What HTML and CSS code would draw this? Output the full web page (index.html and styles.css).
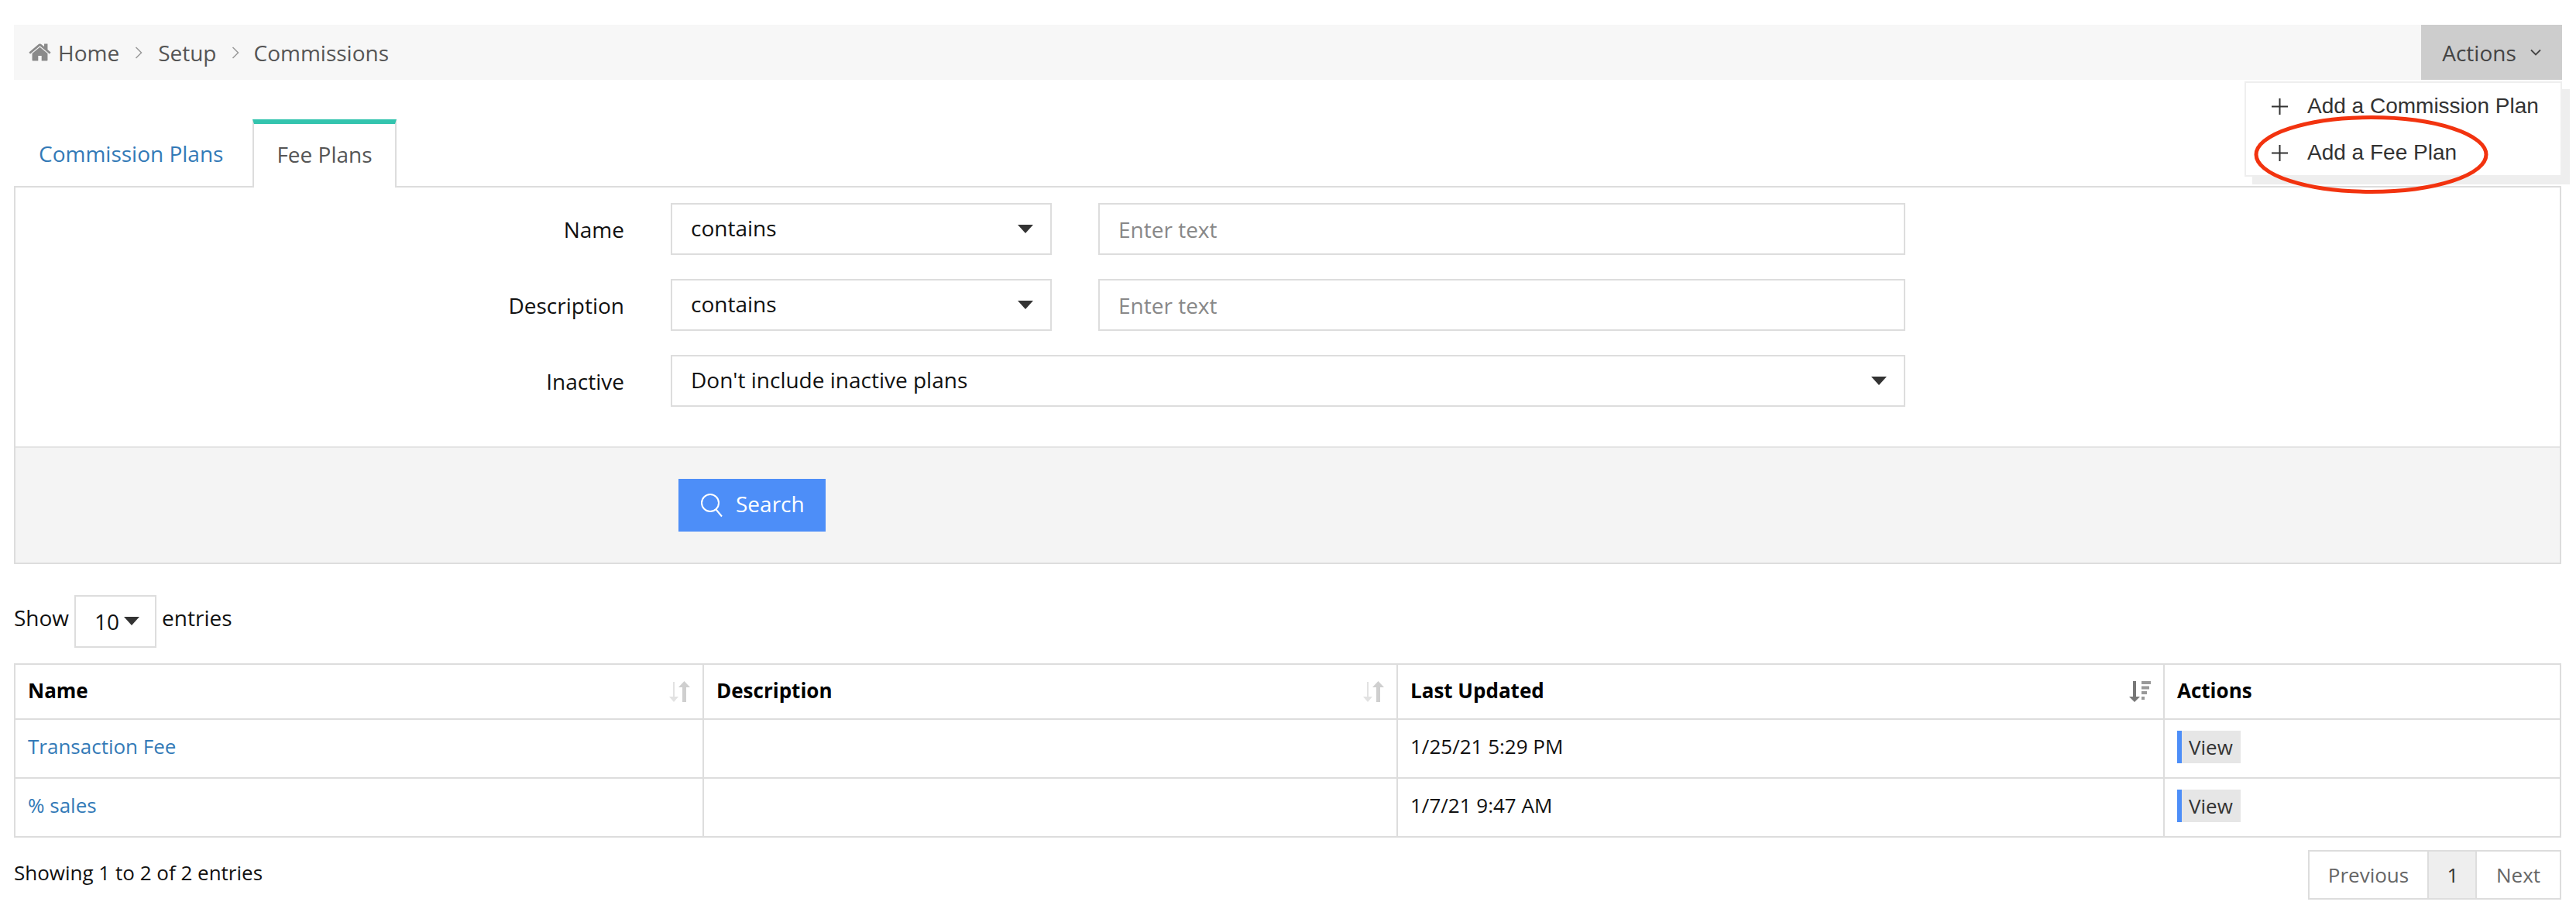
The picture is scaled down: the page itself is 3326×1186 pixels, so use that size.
FILE: index.html
```html
<!DOCTYPE html>
<html lang="en">
<head>
<meta charset="utf-8">
<title>Commissions</title>
<link rel="stylesheet" href="styles.css">
</head>
<body>
<div class="page">
  <header class="topbar">
    <nav class="crumbs">
      <svg class="home" viewBox="0 0 1792 1792"><path d="M1472 992v480q0 26-19 45t-45 19h-384v-384h-256v384h-384q-26 0-45-19t-19-45v-480q0-1 .5-3t.5-3l575-474 575 474q1 2 1 6zm223-69l-62 74q-8 9-21 11h-3q-13 0-21-7l-692-577-692 577q-12 8-24 7-13-2-21-11l-62-74q-8-10-7-23.500t11-21.500l719-599q32-26 76-26t76 26l244 204v-195q0-14 9-23t23-9h192q14 0 23 9t9 23v408l219 182q10 8 11 21.500t-7 23.500z"/></svg>
      <span>Home</span>
      <svg class="sep" viewBox="0 0 10 18"><path d="M1.500 2l7 7-7 7"/></svg>
      <span>Setup</span>
      <svg class="sep" viewBox="0 0 10 18"><path d="M1.500 2l7 7-7 7"/></svg>
      <span>Commissions</span>
    </nav>
    <button class="actions-btn">Actions <svg viewBox="0 0 14 9"><path d="M1 1.500l6 6 6-6"/></svg></button>
  </header>

  <div class="menu">
    <div class="menu-item"><svg viewBox="0 0 21 21"><path d="M10.500 0v21M0 10.500h21"/></svg><span>Add a Commission Plan</span></div>
    <div class="menu-item"><svg viewBox="0 0 21 21"><path d="M10.500 0v21M0 10.500h21"/></svg><span>Add a Fee Plan</span></div>
  </div>
  <svg class="circle" viewBox="0 0 303 101"><ellipse cx="151.500" cy="50.500" rx="148.500" ry="48"/></svg>

  <div class="tabs">
    <a class="tab tab-link">Commission Plans</a>
    <a class="tab tab-active">Fee Plans</a>
  </div>

  <section class="panel">
    <div class="filters">
      <div class="row">
        <label>Name</label>
        <div class="select narrow"><span>contains</span><i class="caret"></i></div>
        <div class="input">Enter text</div>
      </div>
      <div class="row">
        <label>Description</label>
        <div class="select narrow"><span>contains</span><i class="caret"></i></div>
        <div class="input">Enter text</div>
      </div>
      <div class="row">
        <label>Inactive</label>
        <div class="select wide"><span>Don't include inactive plans</span><i class="caret"></i></div>
      </div>
    </div>
    <div class="panel-foot">
      <button class="search">
        <svg viewBox="0 0 30 32"><circle cx="13" cy="13" r="11"/><path d="M20.500 21.500l7.500 9"/></svg>
        <span class="search-label">Search</span>
      </button>
    </div>
  </section>

  <div class="length">
    <span>Show</span>
    <div class="len-select"><span>10</span><i class="caret"></i></div>
    <span>entries</span>
  </div>

  <table class="grid">
    <colgroup><col class="c1"><col class="c2"><col class="c3"><col class="c4"></colgroup>
    <thead>
      <tr>
        <th><div class="th"><span>Name</span>
          <svg class="sort" viewBox="0 0 28 28"><path class="down" d="M6 1h2v19h5l-6 7-6-7h5z"/><path class="up" d="M18 27V8h-5l7.500-8L28 8h-5v19z"/></svg></div></th>
        <th><div class="th"><span>Description</span>
          <svg class="sort" viewBox="0 0 28 28"><path class="down" d="M6 1h2v19h5l-6 7-6-7h5z"/><path class="up" d="M18 27V8h-5l7.500-8L28 8h-5v19z"/></svg></div></th>
        <th><div class="th"><span>Last Updated</span>
          <svg class="sort" viewBox="0 0 28 28"><path class="on" d="M5 0h4v20h5l-7 7-7-7h5z"/><path class="bars" d="M16 0h12v4H16zM16 6.500h10v4H16zM16 13h7v4h-7zM16 20h4v4h-4z"/></svg></div></th>
        <th><div class="th"><span>Actions</span></div></th>
      </tr>
    </thead>
    <tbody>
      <tr>
        <td><a class="cell">Transaction Fee</a></td>
        <td></td>
        <td><span class="cell">1/25/21 5:29 PM</span></td>
        <td><span class="view">View</span></td>
      </tr>
      <tr>
        <td><a class="cell">% sales</a></td>
        <td></td>
        <td><span class="cell">1/7/21 9:47 AM</span></td>
        <td><span class="view">View</span></td>
      </tr>
    </tbody>
  </table>

  <footer class="foot">
    <span class="showing">Showing 1 to 2 of 2 entries</span>
    <div class="pager">
      <span class="pg pg-prev">Previous</span>
      <span class="pg pg-cur">1</span>
      <span class="pg pg-next">Next</span>
    </div>
  </footer>
</div>
</body>
</html>
```
FILE: styles.css
```css
* { box-sizing: border-box; }
html, body { margin: 0; height: 100%; background: #fff; overflow: hidden; }
body { font-family: "Open Sans", sans-serif; font-size: 28px; color: #111; }
.page { position: relative; width: 3326px; height: 1186px; padding: 32px 19px 0 18px; }

.topbar { display: flex; justify-content: space-between; height: 71px; margin-right: -1px; background: #f7f7f7; }
.crumbs { display: flex; align-items: center; padding-left: 18px; color: #555; }
.home { width: 31px; height: 31px; margin-right: 8px; fill: #8a8a8a; }
.sep { width: 10px; height: 18px; margin: 0 20px; fill: none; stroke: #999; stroke-width: 1.500; }
.sep + span + .sep { margin-right: 19px; margin-left: 19px; }
.actions-btn { display: flex; align-items: center; justify-content: center; width: 182px; border: 0; padding: 0; background: #cdcdcd; color: #444; font: inherit; }
.actions-btn svg { width: 14px; height: 9px; margin-left: 18px; fill: none; stroke: #444; stroke-width: 1.800; }

.menu { position: absolute; left: 2898px; top: 105px; width: 410px; height: 123px; background: #fff; border: 2px solid #eee; box-shadow: 10px 10px 0 #eee; font-family: "Liberation Sans", sans-serif; color: #333; z-index: 2; }
.menu-item { display: flex; align-items: center; height: 60px; padding-left: 33px; }
.menu-item svg { width: 21px; height: 21px; margin-right: 25px; fill: none; stroke: #333; stroke-width: 2; }
.circle { position: absolute; left: 2910px; top: 149px; width: 303px; height: 101px; fill: none; stroke: #f2330f; stroke-width: 5; z-index: 3; }

.tabs { display: flex; height: 139px; padding-top: 51px; position: relative; z-index: 1; margin-bottom: -2px; }
.tab { display: flex; align-items: center; height: 88px; color: #337ab7; }
.tab-link { width: 308px; padding-left: 32px; }
.tab-active { justify-content: center; width: 186px; padding-bottom: 4px; color: #555; background: #fff; border: 2px solid #ddd; border-top: 6px solid #33c4ae; border-bottom: 0; }

.panel { border: 2px solid #ddd; height: 488px; display: flex; flex-direction: column; }
.filters { height: 334px; padding-top: 20px; display: flex; flex-direction: column; gap: 31px; }
.row { display: flex; align-items: center; height: 67px; }
.row label { width: 786px; text-align: right; margin-right: 60px; color: #111; }
.select, .input, .len-select { display: flex; align-items: center; border: 2px solid #ddd; background: #fff; height: 67px; }
.select { justify-content: space-between; padding: 0 22px 0 24px; color: #111; }
.select span { position: relative; top: -2px; }
.narrow { width: 492px; }
.wide { width: 1594px; }
.input { width: 1042px; margin-left: 60px; padding-left: 24px; color: #888; }
.caret { width: 0; height: 0; border-left: 10px solid transparent; border-right: 10px solid transparent; border-top: 11px solid #333; }

.panel-foot { flex: 1; border-top: 2px solid #e4e4e4; background: #f4f4f4; padding: 40px 0 0 856px; }
.search { display: flex; align-items: center; width: 190px; height: 68px; border: 0; padding: 0 0 0 28px; background: #4d8ef8; color: #fff; font: inherit; }
.search svg { width: 30px; height: 32px; margin-right: 16px; fill: none; stroke: #fff; stroke-width: 2; }
.search-label { position: relative; top: -2px; }

.length { display: flex; align-items: flex-start; height: 68px; margin-top: 40px; gap: 7px; line-height: 58px; }
.len-select { width: 106px; height: 68px; gap: 6px; padding-left: 24px; line-height: 64px; }
.len-select .caret { margin-top: -2px; }

.grid { width: 3289px; margin-top: 20px; border-collapse: collapse; table-layout: fixed; font-size: 26px; }
.c1 { width: 889px; }
.c2 { width: 896px; }
.c3 { width: 990px; }
.grid th, .grid td { border: 2px solid #ddd; padding: 0 16px; text-align: left; }
.grid thead tr { height: 71px; }
.grid tbody tr { height: 76px; }
.grid td { vertical-align: middle; color: #111; }
.cell { position: relative; top: -3px; }
.grid td a { color: #337ab7; }
.th { display: flex; justify-content: space-between; align-items: center; font-weight: 700; color: #000; }
.th span { position: relative; top: -2px; }
.sort { width: 28px; height: 28px; }
.down { fill: #e2e2e2; }
.up { fill: #cfcfcf; }
.on { fill: #777; }
.bars { fill: #999; }
.view { display: inline-flex; align-items: center; height: 42px; width: 82px; padding-left: 9px; background: #e6e6e6; border-left: 6px solid #4d8ef8; color: #333; vertical-align: middle; position: relative; top: -2px; }

.foot { display: flex; justify-content: space-between; align-items: center; margin-top: 16px; height: 64px; font-size: 26px; color: #111; }
.showing { position: relative; top: -3px; }
.pager { display: flex; height: 64px; border: 2px solid #ddd; color: #666; }
.pg { display: flex; align-items: center; justify-content: center; }
.pg-prev { width: 152px; }
.pg-cur { width: 64px; padding-left: 2px; background: #eee; border-left: 2px solid #ddd; border-right: 2px solid #ddd; color: #333; }
.pg-next { width: 107px; }
```
